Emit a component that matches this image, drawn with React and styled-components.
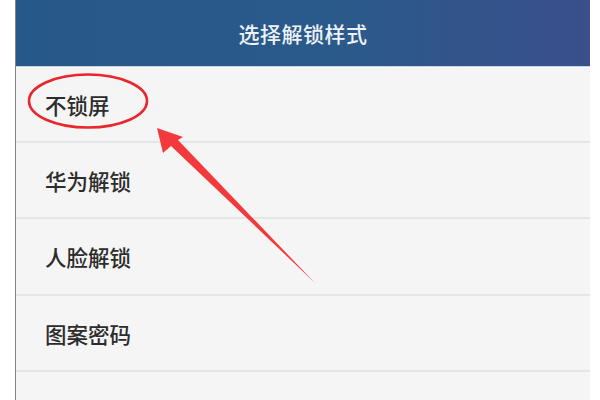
import React from 'react';
import styled, { createGlobalStyle } from 'styled-components';

const GlobalStyle = createGlobalStyle`
  html, body {
    margin: 0;
    padding: 0;
    background: #ffffff;
    font-family: "Noto Sans CJK SC", "Noto Sans", sans-serif;
  }
`;

const Page = styled.div`
  position: relative;
  width: 600px;
  height: 400px;
  overflow: hidden;
  display: flex;
  background: #ffffff;
`;

const Gutter = styled.div`
  width: ${p => p.w}px;
  flex-shrink: 0;
  background: #ffffff;
  border-right: ${p => (p.line ? '1px solid #8c7d8c' : 'none')};
`;

const Phone = styled.div`
  width: 574px;
  flex-shrink: 0;
  background: #f5f5f5;
  display: flex;
  flex-direction: column;
`;

const Header = styled.div`
  height: 67px;
  flex-shrink: 0;
  display: flex;
  align-items: center;
  justify-content: center;
  background: linear-gradient(90deg, #27588a 0%, #2a5a8a 55%, #3a4f8c 100%);
  border-bottom: 1px solid #c9d6e6;
  box-sizing: border-box;
  color: #eef2f7;
  font-size: 21px;
  font-weight: 500;
  letter-spacing: 0.5px;
`;

const List = styled.div`
  display: flex;
  flex-direction: column;
`;

const Row = styled.div`
  height: ${p => p.h}px;
  flex-shrink: 0;
  box-sizing: border-box;
  display: flex;
  align-items: center;
  padding-left: 29px;
  border-bottom: 2px solid #e6e6e6;
  color: #2c2c2c;
  font-size: 21.5px;
  font-weight: 500;
`;

const Overlay = styled.svg`
  position: absolute;
  left: 0;
  top: 0;
  pointer-events: none;
`;

const items = [
  { label: '不锁屏', h: 76 },
  { label: '华为解锁', h: 76 },
  { label: '人脸解锁', h: 77 },
  { label: '图案密码', h: 76 },
  { label: '', h: 76 },
];

export default function App() {
  return (
    <>
      <GlobalStyle />
      <Page>
        <Gutter w={15} line />
        <Phone>
          <Header>选择解锁样式</Header>
          <List>
            {items.map((it, i) => (
              <Row key={i} h={it.h}>{it.label}</Row>
            ))}
          </List>
        </Phone>
        <Gutter w={11} />
        <Overlay width="600" height="400" viewBox="0 0 600 400">
          <ellipse cx="88" cy="101" rx="59" ry="26.5" fill="none" stroke="#e8262b" strokeWidth="2.6" />
          <polygon
            points="157,128 163,153 171,146 315,283 178,140 183,137"
            fill="#f23a3d"
          />
        </Overlay>
      </Page>
    </>
  );
}
